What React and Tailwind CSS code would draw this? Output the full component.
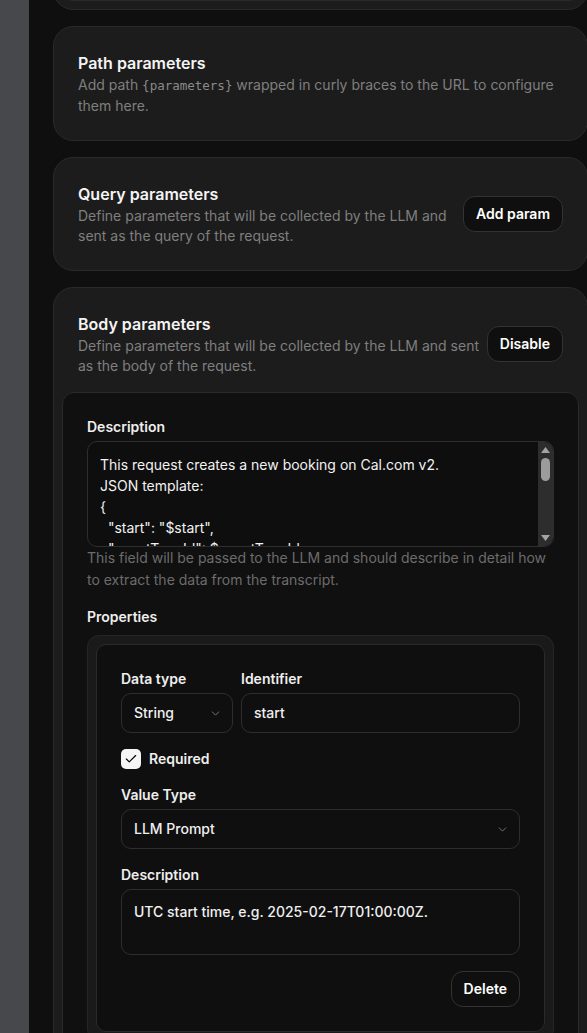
import React from "react";
import { ChevronDown, Check } from "lucide-react";

const template = `This request creates a new booking on Cal.com v2.
JSON template:
{
  "start": "$start",
  "eventTypeId": $eventTypeId,
  "attendee": {
    "name": "$name",
    "email": "$email",
    "timeZone": "$timeZone",
    "language": "en"
  },
  "bookingFieldsResponses": {
    "notes": "$notes"
  },
  "metadata": {}
}
Only fill fields you know.`;

const Card = ({ title, children, action }) => (
  <div className="w-[535px] shrink-0 rounded-[20px] border border-[#2a2a2a] bg-[#1c1c1c] px-6 py-6">
    <div className="flex items-center gap-1">
      <div className="flex-1">
        <h3 className="text-base leading-6 font-semibold text-[#f4f4f4]">{title}</h3>
        <p className="text-sm leading-5 text-[#7f7f7f]">{children}</p>
      </div>
      {action}
    </div>
  </div>
);

const Button = ({ children }) => (
  <button className="h-9 shrink-0 rounded-xl border border-[#333] bg-[#0f0f0f] px-3 text-sm font-semibold text-white">
    {children}
  </button>
);

const Label = ({ children, className = "" }) => (
  <div className={`text-sm leading-5 font-semibold text-[#eeeeee] ${className}`}>{children}</div>
);

const Select = ({ value, className = "" }) => (
  <div className={`flex h-10 items-center justify-between rounded-[10px] border border-[#2e2e2e] bg-[#0f0f0f] pr-2.5 pl-3 ${className}`}>
    <span className="text-sm font-medium text-[#f0f0f0]">{value}</span>
    <ChevronDown size={13} strokeWidth={1.5} className="text-[#8a8a8a]" />
  </div>
);

// dark native-looking scrollbar drawn over the textarea
const FakeScrollbar = () => (
  <div className="absolute top-px right-px bottom-px flex w-[15px] flex-col items-center rounded-r-[9px] bg-[#2d2d2d] py-[5px]">
    <svg width="9" height="6" viewBox="0 0 9 6"><path d="M4.5 0L9 6H0z" fill="#a3a3a3" /></svg>
    <div className="mt-[5px] h-[23px] w-[9px] rounded-full bg-[#9c9c9c]" />
    <div className="flex-1" />
    <svg width="9" height="6" viewBox="0 0 9 6"><path d="M0 0h9L4.5 6z" fill="#a3a3a3" /></svg>
  </div>
);

export default function App() {
  return (
    <div className="flex h-[1033px] w-[587px] overflow-hidden bg-[#0f0f0f] font-['Inter',sans-serif]">
      <div className="w-[29px] shrink-0 bg-[#47484c]" />
      <div className="flex flex-1 flex-col gap-4 pl-6">
        {/* previous section, scrolled off */}
        <div className="-mt-[50px] flex h-[60px] w-[535px] shrink-0 flex-col justify-end rounded-[20px] border border-[#2a2a2a] bg-[#1c1c1c] px-2 pb-2">
          <div className="h-[20px] rounded-xl border border-[#2a2a2a] bg-[#101010]" />
        </div>

        <Card title="Path parameters">
          Add path <code className="font-['DejaVu_Sans_Mono',monospace] text-[12.5px] text-[#8a8a8a]">{"{parameters}"}</code> wrapped in curly braces to the URL to configure them here.
        </Card>

        <Card title="Query parameters" action={<Button>Add param</Button>}>
          Define parameters that will be collected by the LLM and sent as the query of the request.
        </Card>

        <div className="w-[535px] shrink-0 rounded-[20px] border border-[#2a2a2a] bg-[#1c1c1c] px-2 pt-6">
          <div className="flex items-center gap-1 px-4">
            <div className="flex-1">
              <h3 className="text-base leading-6 font-semibold text-[#f4f4f4]">Body parameters</h3>
              <p className="text-sm leading-5 text-[#7f7f7f]">
                Define parameters that will be collected by the LLM and sent as the body of the request.
              </p>
            </div>
            <Button>Disable</Button>
          </div>

          <div className="mt-4 rounded-xl border border-[#2a2a2a] bg-[#101010] px-6 pt-6 pb-6">
            <Label>Description</Label>
            <div className="relative mt-1">
              <textarea
                readOnly
                defaultValue={template}
                className="block h-[106px] w-full resize-none overflow-hidden rounded-[10px] border border-[#2e2e2e] bg-[#0e0e0e] py-3 pr-5 pl-3 text-sm leading-[21px] text-[#f2f2f2] outline-none"
              />
              <FakeScrollbar />
            </div>
            <p className="text-sm leading-[22px] text-[#6c6c6c]">
              This field will be passed to the LLM and should describe in detail how to extract the data from the transcript.
            </p>

            <Label className="mt-4">Properties</Label>
            <div className="mt-2 rounded-xl border border-[#262626] bg-[#1a1a1a] p-2">
              <div className="flex flex-col rounded-[10px] border border-[#2a2a2a] bg-[#0f0f0f] p-6">
                <div className="flex gap-2">
                  <div className="w-[112px]">
                    <Label>Data type</Label>
                    <Select value="String" className="mt-1" />
                  </div>
                  <div className="flex-1">
                    <Label>Identifier</Label>
                    <div className="mt-1 flex h-10 items-center rounded-[10px] border border-[#2e2e2e] bg-[#0f0f0f] px-3 text-sm font-medium text-[#f0f0f0]">
                      start
                    </div>
                  </div>
                </div>

                <div className="mt-4 flex items-center gap-2">
                  <div className="flex h-5 w-5 items-center justify-center rounded-[5px] bg-[#f5f5f5]">
                    <Check size={14} strokeWidth={2} className="text-black" />
                  </div>
                  <span className="text-sm font-semibold text-[#eeeeee]">Required</span>
                </div>

                <Label className="mt-4">Value Type</Label>
                <Select value="LLM Prompt" className="mt-1" />

                <Label className="mt-4">Description</Label>
                <div className="mt-1 h-[66px] rounded-[10px] border border-[#2e2e2e] bg-[#0f0f0f] px-3 py-3 text-sm leading-5 font-medium text-[#f0f0f0]">
                  UTC start time, e.g. 2025-02-17T01:00:00Z.
                </div>

                <div className="mt-4 flex justify-end">
                  <Button>Delete</Button>
                </div>
              </div>
            </div>
          </div>
        </div>
      </div>
    </div>
  );
}
